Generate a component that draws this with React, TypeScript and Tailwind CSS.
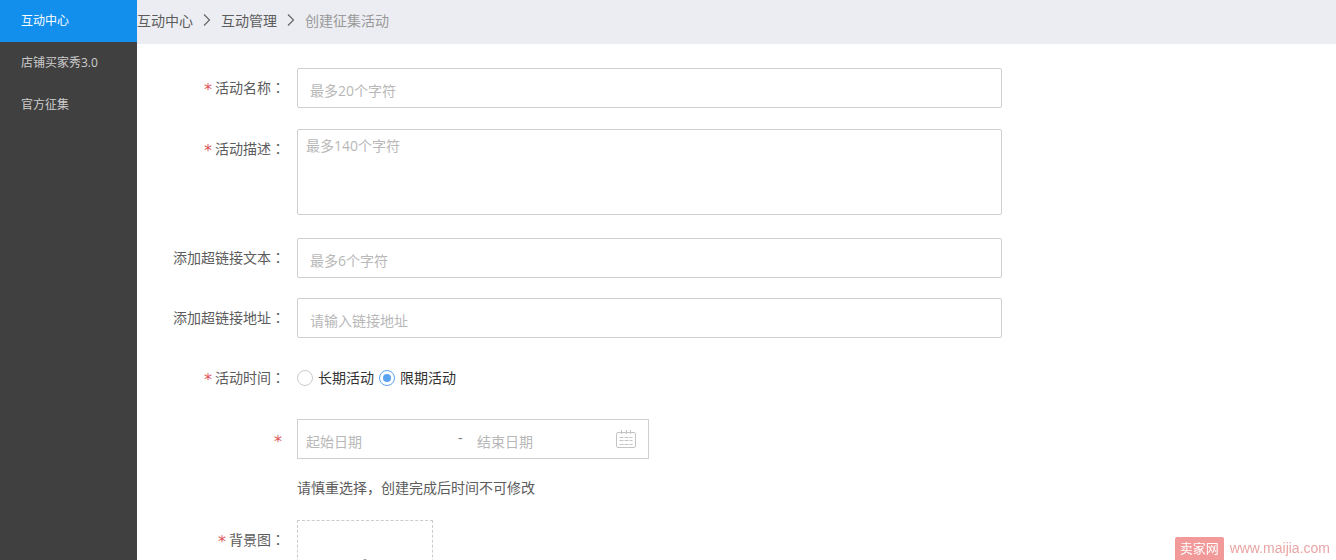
import React, { useState } from 'react';

const menuItems = ['互动中心', '店铺买家秀3.0', '官方征集'];

const placeholderStyle = 'placeholder:text-[#b8b8b8] placeholder:opacity-100';
const inputStyle = `block h-10 w-full rounded-xs border border-[#cfcfcf] bg-white px-3 pt-1 text-sm text-[#555] outline-none focus:border-[#5ba3f0] ${placeholderStyle}`;

interface FieldProps {
  label: string;
  htmlFor?: string;
  required?: boolean;
  className?: string;
  children: React.ReactNode;
}

const Required: React.FC = () => (
  <span className="pt-1.5 font-['DejaVu_Sans'] text-base text-[#e0555a]">*</span>
);

const Field: React.FC<FieldProps> = ({ label, htmlFor, required, className = '', children }) => (
  <div className={`flex items-start gap-3 ${className}`}>
    <label
      htmlFor={htmlFor}
      className="flex h-10 w-[148px] shrink-0 items-center justify-end gap-[3px] pb-0.5 text-[#5c5c5c]"
    >
      {required && <Required />}
      <span>
        {label}
        <span className="font-['Noto_Sans_CJK_TC']">：</span>
      </span>
    </label>
    <div className="min-w-0 max-w-[705px] flex-1">{children}</div>
  </div>
);

const Chevron: React.FC = () => (
  <svg width="8" height="12" viewBox="0 0 8 12" fill="none" stroke="#666" strokeWidth="1.2" aria-hidden="true">
    <path d="M1 0.5 L6.5 6 L1 11.5" />
  </svg>
);

const CalendarIcon: React.FC = () => (
  <svg width="20" height="20" viewBox="0 0 20 20" fill="none" stroke="#c4c4c4" aria-hidden="true">
    <rect x="0.5" y="3.5" width="19" height="15" rx="1.5" />
    <path d="M5.5 1v4M10.5 1v4M14.5 1v4" />
    <path d="M3.5 8.5h13M3.5 11.5h13M3.5 15.5h13" strokeDasharray="4 1" />
  </svg>
);

const App: React.FC = () => {
  const [period, setPeriod] = useState('limited');

  const periods = [
    { value: 'long', label: '长期活动' },
    { value: 'limited', label: '限期活动' },
  ];

  return (
    <div className="flex h-screen overflow-hidden bg-white font-['Open_Sans','Noto_Sans_CJK_SC',sans-serif] text-sm leading-[21px]">
      {/* Sidebar */}
      <nav className="w-[137px] shrink-0 bg-[#404040] text-xs">
        {menuItems.map((item, index) => (
          <a
            key={item}
            href="#"
            className={`flex h-[42px] items-center pl-[21px] ${
              index === 0 ? 'bg-[#128eec] text-white' : 'text-[#ccc]'
            }`}
          >
            {item}
          </a>
        ))}
      </nav>

      <main className="min-w-0 flex-1">
        {/* Breadcrumb */}
        <header className="flex h-11 items-center gap-2.5 bg-[#ecedf2] pb-1 text-[#5c5c5c]">
          <a href="#">互动中心</a>
          <Chevron />
          <a href="#">互动管理</a>
          <Chevron />
          <span className="text-[#999]">创建征集活动</span>
        </header>

        <form className="flex flex-col gap-5 pt-6" onSubmit={(e) => e.preventDefault()}>
          <Field label="活动名称" htmlFor="name" required>
            <input id="name" type="text" maxLength={20} placeholder="最多20个字符" className={inputStyle} />
          </Field>

          <Field label="活动描述" htmlFor="description" required className="pt-px pb-[3px]">
            <textarea
              id="description"
              maxLength={140}
              placeholder="最多140个字符"
              className={`block h-[86px] w-full resize-none rounded-xs border border-[#cfcfcf] bg-white px-2 py-[5px] text-sm leading-[21px] text-[#555] outline-none focus:border-[#5ba3f0] ${placeholderStyle}`}
            />
          </Field>

          <Field label="添加超链接文本" htmlFor="linkText">
            <input id="linkText" type="text" maxLength={6} placeholder="最多6个字符" className={inputStyle} />
          </Field>

          <Field label="添加超链接地址" htmlFor="linkUrl">
            <input id="linkUrl" type="text" placeholder="请输入链接地址" className={inputStyle} />
          </Field>

          <Field label="活动时间" required className="pb-px">
            <div className="flex h-10 items-center gap-[5px] text-[#333]">
              {periods.map(({ value, label }) => (
                <label key={value} className="flex items-center gap-[5px]">
                  <input
                    type="radio"
                    name="period"
                    value={value}
                    checked={period === value}
                    onChange={() => setPeriod(value)}
                    className="flex size-4 appearance-none items-center justify-center rounded-full border border-[#ccc] bg-white before:size-2 before:rounded-full checked:border-[#5ba3f0] checked:before:bg-[#5ba3f0]"
                  />
                  <span className="pb-0.5">{label}</span>
                </label>
              ))}
            </div>
          </Field>

          <div className="flex items-start gap-3">
            <div className="flex h-10 w-[148px] shrink-0 items-center justify-end pr-[3px]">
              <Required />
            </div>
            <div>
              <div className="flex h-10 w-[352px] items-center border border-[#cfcfcf] pr-3 pl-2">
                <input
                  type="text"
                  aria-label="起始日期"
                  placeholder="起始日期"
                  className={`h-full w-[152px] pt-1 text-[#555] outline-none ${placeholderStyle}`}
                />
                <span className="w-[19px] pb-1 text-[#777]">-</span>
                <input
                  type="text"
                  aria-label="结束日期"
                  placeholder="结束日期"
                  className={`h-full min-w-0 flex-1 pt-1 text-[#555] outline-none ${placeholderStyle}`}
                />
                <CalendarIcon />
              </div>
              <p className="mt-[18px] mb-0.5 text-[#5c5c5c]">请慎重选择，创建完成后时间不可修改</p>
            </div>
          </div>

          <Field label="背景图" htmlFor="background" required>
            <button
              id="background"
              type="button"
              aria-label="背景图"
              className="flex size-[136px] items-center justify-center border border-dashed border-[#ccc]"
            >
              <svg width="58" height="58" viewBox="0 0 58 58" stroke="#999" strokeWidth="4" strokeLinecap="round" aria-hidden="true">
                <path d="M29 2v54M2 29h54" />
              </svg>
            </button>
          </Field>
        </form>
      </main>

      {/* Site mark in the bottom corner */}
      <div className="fixed right-1.5 bottom-0 flex items-center gap-1.5 font-['Liberation_Sans','Noto_Sans_CJK_SC',sans-serif] text-[13px] text-[#eaa5a5]">
        <span className="rounded-t-xs bg-[#f29a9a] px-[5px] py-px text-white">卖家网</span>
        <span className="text-sm leading-[21px]">www.maijia.com</span>
      </div>
    </div>
  );
};

export default App;
